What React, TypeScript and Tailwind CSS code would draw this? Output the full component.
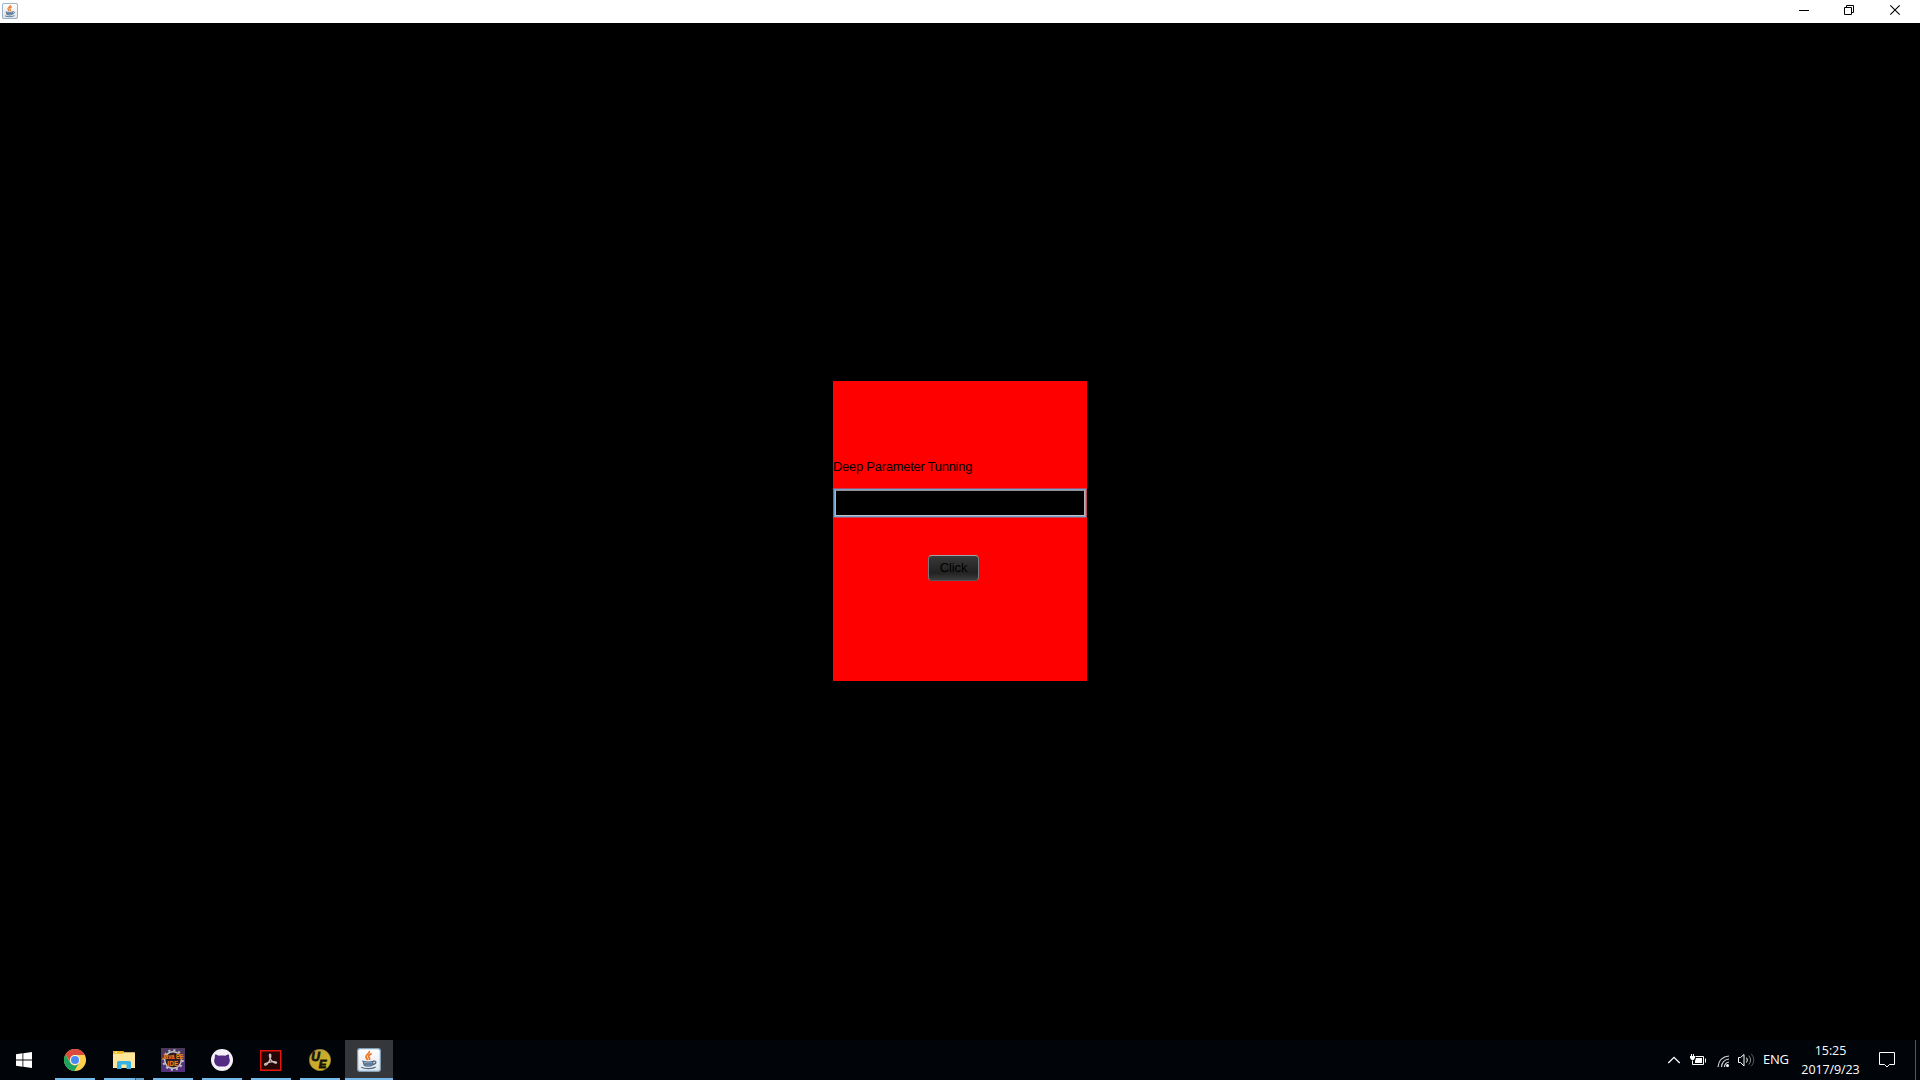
import type { ReactNode } from "react";

function JavaIcon({ size }: { size: number }) {
  return (
    <svg width={size} height={size} viewBox="0 0 24 24">
      <defs>
        <linearGradient id="javaTile" x1="0" y1="0" x2="0" y2="1">
          <stop offset="0" stopColor="#ffffff" />
          <stop offset="1" stopColor="#dfe5ea" />
        </linearGradient>
      </defs>
      <rect x="0.6" y="0.6" width="22.8" height="22.8" rx="2.5" fill="url(#javaTile)" stroke="#7f9fb8" strokeWidth="1.3" />
      <path d="M12.300 3c1.200 2.200-3.600 3.200-3.300 5.900.1 1.400 1.500 2 1.600 3.300M14.700 5.500c-2.200 1-3.300 1.900-3 3.200.3 1 1.600 1.500.7 3.200" fill="none" stroke="#ee7625" strokeWidth="1.800" />
      <path d="M6 13.200c3 .9 7.500.9 10.200 0l-1 4c-2 1.200-6 1.200-8 0z" fill="#a3b4c6" stroke="#4c6b8b" strokeWidth="1.200" />
      <path d="M16.200 13.300c3.700-1 3.700 2.800-.8 3.200M4.300 19.200c3.300 1.900 11.500 1.800 14.300-.3M7.300 16h7.500" fill="none" stroke="#4c6b8b" strokeWidth="1.300" />
    </svg>
  );
}

function WindowsIcon() {
  return (
    <svg width="16" height="16" viewBox="0 0 16 16" fill="#fff">
      <path d="M0 2.200 6.500 1.300v6.200H0zM7.300 1.200 16 0v7.500H7.300zM0 8.400h6.500v6.300L0 13.800zM7.300 8.400H16V16l-8.700-1.200z" />
    </svg>
  );
}

function ChromeIcon() {
  return (
    <svg width="22" height="22" viewBox="0 0 22 22">
      <circle cx="11" cy="11" r="11" fill="#fdd04d" />
      <path d="M1.470 5.500A11 11 0 0 1 20.800 6H11a5 5 0 0 0-4.800 6.500z" fill="#dc4a3d" />
      <path d="M1.470 5.500A11 11 0 0 0 10.300 22l4.200-7.200a5 5 0 0 1-8.200-1z" fill="#1da261" />
      <circle cx="11" cy="11" r="5" fill="#f5f7fa" />
      <circle cx="11" cy="11" r="4" fill="#4a89f3" />
    </svg>
  );
}

function ExplorerIcon() {
  return (
    <svg width="22" height="18" viewBox="0 0 22 18">
      <path d="M0 .5Q0 0 .5 0H10l1.200 1.300H21.500q.5 0 .5.500V17H0z" fill="#ffe69a" />
      <path d="M0 0h10l1 1.300-1 1.400H0z" fill="#edb91c" />
      <path d="M2 .7h2v1H2z" fill="#fff" />
      <path d="M4 18v-6.500q0-1.500 1.500-1.500h11q1.500 0 1.500 1.500V18h-4.500v-4.500h-5V18z" fill="#35b3e8" />
    </svg>
  );
}

function JavaEEIcon() {
  return (
    <svg width="24" height="24" viewBox="0 0 24 24">
      <defs>
        <linearGradient id="eeTile" x1="0" y1="0" x2="0" y2="1">
          <stop offset="0" stopColor="#4b3a5c" />
          <stop offset="1" stopColor="#543080" />
        </linearGradient>
      </defs>
      <rect width="24" height="24" fill="url(#eeTile)" />
      <circle cx="12" cy="12" r="9.800" fill="none" stroke="#c0bfc6" strokeWidth="2" strokeDasharray="2.200 2.931" />
      <circle cx="12" cy="12" r="8.300" fill="#2a1c29" stroke="#c8c8cc" strokeWidth="1.500" />
      <g fill="#f58218" stroke="#5a1c06" strokeWidth="0.600" paintOrder="stroke" fontFamily="Liberation Sans, sans-serif" fontWeight="700" fontSize="7.600">
        <text x="1" y="11.300" textLength="21.500" lengthAdjust="spacingAndGlyphs">Java EE</text>
        <text x="6.300" y="17.700" textLength="11" lengthAdjust="spacingAndGlyphs">IDE</text>
      </g>
    </svg>
  );
}

function GitHubDesktopIcon() {
  return (
    <svg width="22" height="22" viewBox="0 0 22 22">
      <circle cx="11" cy="11" r="11" fill="#f3f0f7" />
      <path d="M4.200 5.500c1.500 0 2.500.7 3.300 1.300 2-.5 5-.5 7 0 .8-.6 1.800-1.300 3.300-1.300.5 1.300.4 2.200.3 3 1.800 3.800 0 8-4 9H7.900c-4.200-1-5.800-5.200-4-9-.1-.8-.2-1.700.3-3z" fill="#542b83" />
    </svg>
  );
}

function AcrobatIcon() {
  return (
    <svg width="22" height="21" viewBox="0 0 22 21">
      <rect x="0.750" y="0.750" width="20" height="19.500" fill="#260505" stroke="#e4150c" strokeWidth="1.500" />
      <path d="M4.800 15c-1-.9 1-2 4-2.700 3.800-1 7.800-1 7.800.3 0 1.300-4.200-.3-5.900-3-1.400-2.300-1.800-5.400-.6-5.400 1.300 0 .8 3.600-.8 6.800-1.300 2.600-3.300 4.800-4.500 4z" fill="none" stroke="#cfc4c4" strokeWidth="1.300" />
    </svg>
  );
}

function UltraEditIcon() {
  return (
    <svg width="22" height="22" viewBox="0 0 22 22">
      <defs>
        <linearGradient id="ueDisc" x1="0" y1="0" x2="1" y2="1">
          <stop offset="0" stopColor="#b79f3c" />
          <stop offset="1" stopColor="#dcb91d" />
        </linearGradient>
      </defs>
      <circle cx="11" cy="11" r="10.700" fill="url(#ueDisc)" stroke="#91803a" strokeWidth="0.600" />
      <g fill="#17140a" stroke="#17140a" strokeWidth="0.800" fontFamily="Liberation Sans, sans-serif" fontStyle="italic" fontWeight="700">
        <text x="2.300" y="12" fontSize="12">U</text>
        <text x="9.800" y="18.500" fontSize="11.500">E</text>
      </g>
    </svg>
  );
}

function Task({ children, active, split }: { children: ReactNode; active?: boolean; split?: boolean }) {
  return (
    <div className={active ? "flex h-10 w-12 flex-col bg-[#36373b]" : "flex h-10 w-12 flex-col px-1"}>
      <div className="flex h-[38px] items-center justify-center pt-0.5">{children}</div>
      <div className="flex h-0.5 bg-[#76b9ed]">
        {split && <div className="ml-[31px] h-0.5 flex-1 border-l border-[#37587a] bg-[#629bc7]" />}
      </div>
    </div>
  );
}

export default function App() {
  return (
    <div className="flex h-[1080px] w-[1920px] flex-col overflow-hidden bg-black">
      <header className="flex h-[23px] shrink-0 items-start justify-between bg-white">
        <div className="pt-[3px] pl-[2px]">
          <JavaIcon size={16} />
        </div>
        <svg width="140" height="23" viewBox="0 0 140 23" fill="none" stroke="#000">
          <path d="M19 10.500h10" />
          <path d="M64.500 7.500h7v7h-7zM66.500 7.500v-2h7v7h-2" />
          <path d="M110.300 5.300l9.400 9.400M119.700 5.300l-9.400 9.400" strokeWidth="1.100" />
        </svg>
      </header>

      <main className="flex flex-1 justify-center pt-[358px]">
        <section className="flex h-[300px] w-[254px] flex-col bg-[#ff0000] pt-[78px] font-['Liberation_Sans',sans-serif] text-[13px] leading-4 text-black">
          <p className="tracking-[-0.28px] whitespace-nowrap">Deep Parameter Tunning</p>
          <div className="mt-[13px] h-[30px] border border-[#b8485c]">
            <div className="h-full border border-[#73a4d1]">
              <div className="h-full border border-t-[#8c8e92] border-r-[#b4b4bc] border-b-[#c0c0c4] border-l-[#b4b4bc] bg-black" />
            </div>
          </div>
          <button className="mt-[37px] ml-[95px] h-[26px] w-[51px] rounded-[4px] border border-t-[#a5a5a8] border-r-[#77797f] border-b-[#55565b] border-l-[#77797f] bg-linear-to-b from-[#393939] via-[#222222] via-70% to-[#3d3d3d] leading-6 tracking-[-0.1px]">
            Click
          </button>
        </section>
      </main>

      <footer className="flex h-10 shrink-0 justify-between bg-[#010409] font-['Open_Sans',sans-serif] text-white">
        <div className="flex">
          <div className="flex w-[51px] items-center pl-4">
            <WindowsIcon />
          </div>
          <div className="flex gap-px">
            <Task><ChromeIcon /></Task>
            <Task split><ExplorerIcon /></Task>
            <Task><JavaEEIcon /></Task>
            <Task><GitHubDesktopIcon /></Task>
            <Task><AcrobatIcon /></Task>
            <Task><UltraEditIcon /></Task>
            <Task active><JavaIcon size={24} /></Task>
          </div>
        </div>
        <div className="flex">
          <svg width="100" height="40" viewBox="1660 1040 100 40" fill="none" stroke="#fff">
            <path d="M1668.300 1063l5.700-5.700 5.700 5.700" strokeWidth="1.300" />
            <path d="M1695.500 1056.500h8v8h-11v-4M1705.500 1058.500v4" />
            <path d="M1696 1058h6v5h-7v-2z" fill="#fff" stroke="none" />
            <path d="M1691.500 1054v2M1693.500 1054v2" />
            <path d="M1690 1056h5v2l-1.500 2h-2l-1.500-2z" fill="#fff" stroke="none" />
            <circle cx="1727.500" cy="1065.500" r="1.500" fill="#fff" stroke="none" />
            <path d="M1724.500 1067q0-4 4.500-5M1721.500 1067q.5-7 7.500-8M1718 1067q1-10 11-11" stroke="#d5d5d7" strokeWidth="1.200" />
            <path d="M1738.500 1057.500h2l3.500-3v11.500l-3.500-3.500h-2zM1746.500 1057.700q1.800 2.300 0 4.800" />
            <path d="M1748.800 1055.700q3.600 4.300 0 8.800" stroke="#8b8d91" />
            <path d="M1751.300 1053.800q5 6.200 0 12.500" stroke="#55585d" />
          </svg>
          <div className="w-10 pt-[10px] pl-[3px] text-[13px] leading-[18px] tracking-[-0.2px]">ENG</div>
          <div className="w-[61px] pt-px text-center text-[12.5px] leading-[19px] tracking-[-0.1px] whitespace-nowrap">
            <div>15:25</div>
            <div>2017/9/23</div>
          </div>
          <svg width="54" height="40" viewBox="-1 0 54 40" fill="none" stroke="#fff">
            <path d="M17.500 12.500h15v12h-5l-2.500 2.500-2.500-2.500h-5z" />
          </svg>
          <div className="w-[5px] border-l border-[#55575b]" />
        </div>
      </footer>
    </div>
  );
}
